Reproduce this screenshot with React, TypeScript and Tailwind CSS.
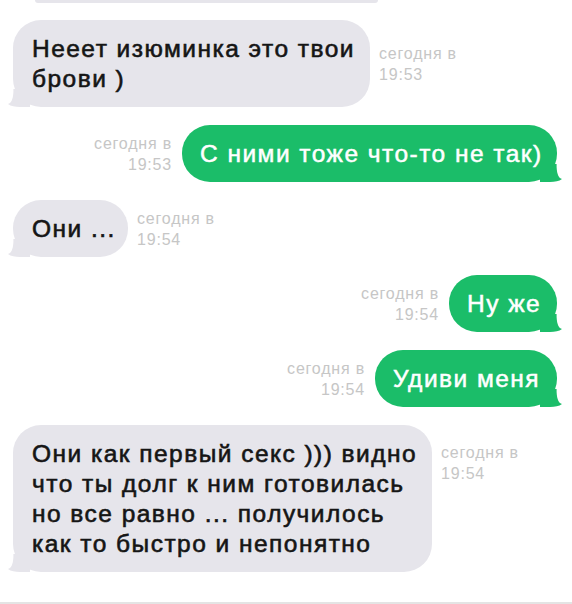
import React from "react";

type Msg = {
  out: boolean;
  lines: string[];
  w: number;
  time: string;
  tsTop?: number;
};

const msgs: Msg[] = [
  { out: false, lines: ["Нееет изюминка это твои", "брови )"], w: 357, time: "19:53" },
  { out: true, lines: ["С ними тоже что-то не так)"], w: 375, time: "19:53" },
  { out: false, lines: ["Они ..."], w: 115, time: "19:54" },
  { out: true, lines: ["Ну же"], w: 108, time: "19:54" },
  { out: true, lines: ["Удиви меня"], w: 182, time: "19:54" },
  {
    out: false,
    lines: [
      "Они как первый секс ))) видно",
      "что ты долг к ним готовилась",
      "но все равно ... получилось",
      "как то быстро и непонятно",
    ],
    w: 419,
    time: "19:54",
    tsTop: 17,
  },
];

function Tail({ color, flip }: { color: string; flip?: boolean }) {
  return (
    <svg
      width="22"
      height="18"
      viewBox="0 0 22 18"
      className={flip ? "absolute right-[-5px] bottom-0 -scale-x-100" : "absolute left-[-5px] bottom-0"}
    >
      <path d="M0,15 C3,14.2 5,11 5.4,3 L5.4,0 L22,0 L22,18 L12,18 C7,18 3,17.2 0,15 Z" fill={color} />
    </svg>
  );
}

function Stamp({ time, right, top }: { time: string; right?: boolean; top?: number }) {
  return (
    <div
      className={
        "text-[16px] leading-[21px] tracking-[0.05em] text-[#c6c6c6] whitespace-nowrap " +
        (right ? "text-right" : "text-left")
      }
      style={top !== undefined ? { alignSelf: "flex-start", marginTop: top } : undefined}
    >
      <div>сегодня в</div>
      <div>{time}</div>
    </div>
  );
}

export default function App() {
  return (
    <div className="w-[572px] h-[604px] bg-white overflow-hidden flex flex-col font-['Liberation_Sans',Arial,sans-serif]">
      <div className="ml-[35px] w-[343px] h-[3px] bg-[#e6e5eb] rounded-b-[4px] shrink-0" />
      <div className="flex flex-col gap-[18px] mt-[17px]">
        {msgs.map((m, i) =>
          m.out ? (
            <div key={i} className="flex items-center justify-end gap-[10px] pr-[15px]">
              <Stamp time={m.time} right />
              <div
                className="relative bg-[#1bbd69] text-white rounded-[28px] pl-[18px] py-[13.5px] text-[24.5px] leading-[30px] tracking-[0.06em] whitespace-nowrap [-webkit-text-stroke:0.5px_white]"
                style={{ width: m.w }}
              >
                <Tail color="#1bbd69" flip />
                <span className="relative">{m.lines.map((l, j) => (
                  <div key={j}>{l}</div>
                ))}</span>
              </div>
            </div>
          ) : (
            <div key={i} className="flex items-center gap-[9px] pl-[13px]">
              <div
                className="relative bg-[#e6e5eb] text-[#151515] rounded-[28px] pl-[19px] py-[13.5px] text-[24.5px] leading-[30px] tracking-[0.06em] whitespace-nowrap [-webkit-text-stroke:0.6px_#151515]"
                style={{ width: m.w }}
              >
                <Tail color="#e6e5eb" />
                <span className="relative">{m.lines.map((l, j) => (
                  <div key={j}>{l}</div>
                ))}</span>
              </div>
              <Stamp time={m.time} top={m.tsTop} />
            </div>
          )
        )}
      </div>
      <div className="mt-auto h-[2px] bg-[#e4e4e4] shrink-0" />
    </div>
  );
}
